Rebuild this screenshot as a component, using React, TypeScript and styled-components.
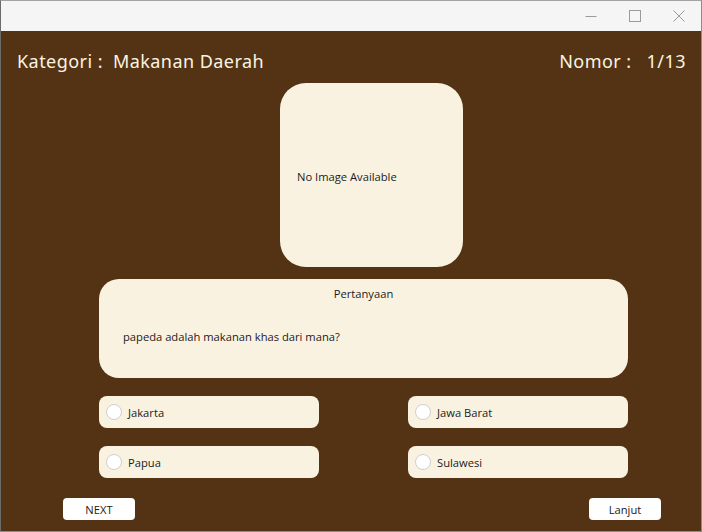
import { FC } from 'react';
import styled, { createGlobalStyle } from 'styled-components';

const GlobalStyle = createGlobalStyle`
  html, body { margin: 0; padding: 0; background: #f5f5f5; }
  * { box-sizing: border-box; }
`;

const Window = styled.div`
  width: 702px;
  height: 532px;
  display: flex;
  flex-direction: column;
  border-top: 1px solid #a3a3a3;
  border-left: 1px solid #6b6b6b;
  border-right: 1px solid #8c8c8c;
  border-bottom: 1px solid #8c8c8c;
  overflow: hidden;
`;

const TitleBar = styled.div`
  height: 30px;
  background: #f5f5f5;
  display: flex;
  justify-content: flex-end;
  align-items: center;
`;

const WinButton = styled.div`
  width: 44px;
  height: 30px;
  display: flex;
  align-items: center;
  justify-content: center;
  color: #9a9a9a;
  & svg { width: 12px; height: 12px; }
`;

const Stage = styled.div`
  flex: 1;
  background: #533313;
  display: flex;
  flex-direction: column;
  font-family: 'Open Sans', 'Noto Sans', sans-serif;
  font-size: 11.2px;
  color: #1c1a20;
`;

const Header = styled.div`
  height: 52px;
  padding: 8px 15px 0 16px;
  display: flex;
  align-items: center;
  justify-content: space-between;
  color: #fbf3e2;
  font-family: 'Noto Sans', 'Open Sans', sans-serif;
  font-size: 18px;
  letter-spacing: 0.45px;
`;

const HeaderGroup = styled.div<{ $gap: number }>`
  display: flex;
  gap: ${({ $gap }) => $gap}px;
`;

const Panel = styled.div<{ $radius: number }>`
  background: #faf2e1;
  border-radius: ${({ $radius }) => $radius}px;
`;

const ImageBox = styled(Panel)`
  width: 183px;
  height: 184px;
  margin-left: 279px;
  display: flex;
  align-items: center;
  padding: 2px 0 0 17px;
`;

const Body = styled.div`
  padding-left: 98px;
  display: flex;
  flex-direction: column;
`;

const QuestionBox = styled(Panel)`
  width: 529px;
  height: 99px;
  margin-top: 12px;
  display: flex;
  flex-direction: column;
`;

const QuestionTitle = styled.div`
  text-align: center;
  margin-top: 7px;
`;

const QuestionText = styled.div`
  margin-top: 28px;
  padding-left: 24px;
`;

const Options = styled.div`
  margin-top: 18px;
  display: grid;
  grid-template-columns: 220px 220px;
  column-gap: 89px;
  row-gap: 18px;
`;

const Option = styled(Panel)`
  height: 32px;
  display: flex;
  align-items: center;
  gap: 6px;
  padding-left: 7px;
`;

const Radio = styled.span`
  width: 16px;
  height: 16px;
  border-radius: 50%;
  background: #fff;
  border: 1px solid #cfcfcf;
`;

const Footer = styled.div`
  margin-top: 20px;
  padding: 0 40px 0 62px;
  display: flex;
  justify-content: space-between;
`;

const Button = styled.button`
  width: 72px;
  height: 22px;
  background: #fff;
  border: none;
  border-radius: 4px;
  font-family: inherit;
  font-size: inherit;
  color: #1c1a20;
  padding: 0;
`;

const options = ['Jakarta', 'Jawa Barat', 'Papua', 'Sulawesi'];

const App: FC = () => (
  <Window>
    <GlobalStyle />
    <TitleBar>
      <WinButton>
        <svg viewBox="0 0 12 12"><path d="M0.5 6.5h11" stroke="currentColor" fill="none" /></svg>
      </WinButton>
      <WinButton>
        <svg viewBox="0 0 12 12"><rect x="0.5" y="0.5" width="11" height="11" stroke="currentColor" fill="none" /></svg>
      </WinButton>
      <WinButton>
        <svg viewBox="0 0 12 12"><path d="M0.5 0.5l11 11M11.5 0.5l-11 11" stroke="currentColor" fill="none" /></svg>
      </WinButton>
    </TitleBar>
    <Stage>
      <Header>
        <HeaderGroup $gap={10}>
          <span>Kategori :</span>
          <span>Makanan Daerah</span>
        </HeaderGroup>
        <HeaderGroup $gap={15}>
          <span>Nomor :</span>
          <span>1/13</span>
        </HeaderGroup>
      </Header>
      <ImageBox $radius={26}>No Image Available</ImageBox>
      <Body>
        <QuestionBox $radius={20}>
          <QuestionTitle>Pertanyaan</QuestionTitle>
          <QuestionText>papeda adalah makanan khas dari mana?</QuestionText>
        </QuestionBox>
        <Options>
          {options.map(o => (
            <Option $radius={8} key={o}>
              <Radio />
              {o}
            </Option>
          ))}
        </Options>
      </Body>
      <Footer>
        <Button>NEXT</Button>
        <Button>Lanjut</Button>
      </Footer>
    </Stage>
  </Window>
);

export default App;
